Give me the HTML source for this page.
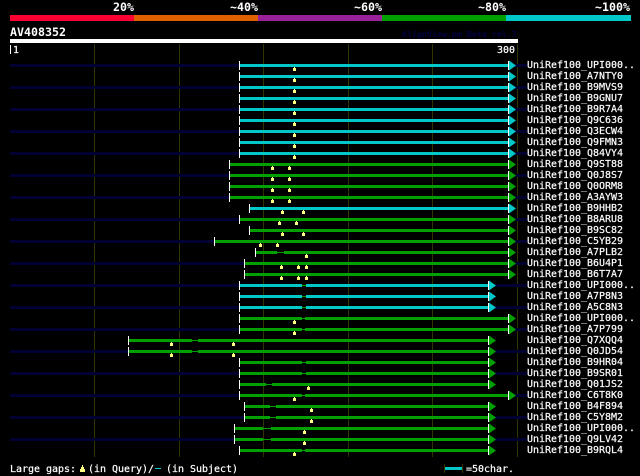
<!DOCTYPE html>
<html><head><meta charset="utf-8"><style>
html,body{margin:0;padding:0;background:#000;width:640px;height:476px;overflow:hidden}
svg{display:block}
text{font-family:"DejaVu Sans Mono","Liberation Mono",monospace;font-size:9.97px;fill:#fff;stroke:#fff;stroke-width:.2px}
.b{font-weight:bold;font-size:11.63px;stroke-width:0}
.d{fill:#000033}.c{fill:#00c8c8}.g{fill:#00a000}
</style></head><body>
<svg width="640" height="476" viewBox="0 0 640 476" xmlns="http://www.w3.org/2000/svg">
<defs>
<g id="s"><rect x="0" y="-3" width="1" height="9" fill="#fff"/></g>
<g id="a"><rect x="0" y="-3" width="1" height="9" fill="#fff"/><polygon points="1,-3.5 8,1.5 1,6.5"/></g>
<g id="t"><rect x="0" y="3" width="1" height="1" fill="#ffff80"/><rect x="-1" y="4" width="3" height="3" fill="#ffff80"/></g>
</defs>
<rect width="640" height="476" fill="#000"/>
<text class="b" x="113" y="11">20%</text><text class="b" x="230" y="11">~40%</text><text class="b" x="354" y="11">~60%</text><text class="b" x="478" y="11">~80%</text><text class="b" x="595" y="11">~100%</text>
<rect x="10" y="15" width="124" height="6" fill="#ff0033"/><rect x="134" y="15" width="124" height="6" fill="#e06000"/><rect x="258" y="15" width="124" height="6" fill="#992299"/><rect x="382" y="15" width="124" height="6" fill="#00a000"/><rect x="506" y="15" width="125" height="6" fill="#00c8c8"/>
<text class="b" x="10" y="36">AV408352</text>
<text x="402" y="37" style="font-size:8.31px;font-weight:bold;fill:#000044;stroke-width:0">AlignView.pm Beta rel.7</text>
<rect x="10" y="39" width="508" height="4" fill="#fff"/>
<rect x="10" y="45" width="1" height="9" fill="#fff"/><text x="13" y="53">1</text><text x="497" y="53">300</text><rect x="517" y="45" width="1" height="9" fill="#fff"/>
<rect x="94" y="44" width="1" height="413" fill="#333300"/><rect x="179" y="44" width="1" height="413" fill="#333300"/><rect x="263" y="44" width="1" height="413" fill="#333300"/><rect x="348" y="44" width="1" height="413" fill="#333300"/><rect x="432" y="44" width="1" height="413" fill="#333300"/><rect x="517" y="44" width="1" height="413" fill="#333300"/>

<g transform="translate(0,64)" class="c"><rect class="d" x="10" y="0" width="229" height="3"/><rect class="d" x="515" y="0" width="12" height="3"/><rect x="240" y="0" width="268" height="3"/><use href="#s" x="239"/><use href="#a" x="508"/><use href="#t" x="294"/><text x="527" y="4">UniRef100_UPI000..</text></g>
<g transform="translate(0,75)" class="c"><rect x="240" y="0" width="268" height="3"/><use href="#s" x="239"/><use href="#a" x="508"/><use href="#t" x="294"/><text x="527" y="4">UniRef100_A7NTY0</text></g>
<g transform="translate(0,86)" class="c"><rect class="d" x="10" y="0" width="229" height="3"/><rect class="d" x="515" y="0" width="12" height="3"/><rect x="240" y="0" width="268" height="3"/><use href="#s" x="239"/><use href="#a" x="508"/><use href="#t" x="294"/><text x="527" y="4">UniRef100_B9MVS9</text></g>
<g transform="translate(0,97)" class="c"><rect x="240" y="0" width="268" height="3"/><use href="#s" x="239"/><use href="#a" x="508"/><use href="#t" x="294"/><text x="527" y="4">UniRef100_B9GNU7</text></g>
<g transform="translate(0,108)" class="c"><rect class="d" x="10" y="0" width="229" height="3"/><rect class="d" x="515" y="0" width="12" height="3"/><rect x="240" y="0" width="268" height="3"/><use href="#s" x="239"/><use href="#a" x="508"/><use href="#t" x="294"/><text x="527" y="4">UniRef100_B9R7A4</text></g>
<g transform="translate(0,119)" class="c"><rect x="240" y="0" width="268" height="3"/><use href="#s" x="239"/><use href="#a" x="508"/><use href="#t" x="294"/><text x="527" y="4">UniRef100_Q9C636</text></g>
<g transform="translate(0,130)" class="c"><rect class="d" x="10" y="0" width="229" height="3"/><rect class="d" x="515" y="0" width="12" height="3"/><rect x="240" y="0" width="268" height="3"/><use href="#s" x="239"/><use href="#a" x="508"/><use href="#t" x="294"/><text x="527" y="4">UniRef100_Q3ECW4</text></g>
<g transform="translate(0,141)" class="c"><rect x="240" y="0" width="268" height="3"/><use href="#s" x="239"/><use href="#a" x="508"/><use href="#t" x="294"/><text x="527" y="4">UniRef100_Q9FMN3</text></g>
<g transform="translate(0,152)" class="c"><rect class="d" x="10" y="0" width="229" height="3"/><rect class="d" x="515" y="0" width="12" height="3"/><rect x="240" y="0" width="268" height="3"/><use href="#s" x="239"/><use href="#a" x="508"/><use href="#t" x="294"/><text x="527" y="4">UniRef100_Q84VY4</text></g>
<g transform="translate(0,163)" class="g"><rect x="230" y="0" width="278" height="3"/><use href="#s" x="229"/><use href="#a" x="508"/><use href="#t" x="272"/><use href="#t" x="289"/><text x="527" y="4">UniRef100_Q9ST88</text></g>
<g transform="translate(0,174)" class="g"><rect class="d" x="10" y="0" width="219" height="3"/><rect class="d" x="515" y="0" width="12" height="3"/><rect x="230" y="0" width="278" height="3"/><use href="#s" x="229"/><use href="#a" x="508"/><use href="#t" x="272"/><use href="#t" x="289"/><text x="527" y="4">UniRef100_Q0J8S7</text></g>
<g transform="translate(0,185)" class="g"><rect x="230" y="0" width="278" height="3"/><use href="#s" x="229"/><use href="#a" x="508"/><use href="#t" x="272"/><use href="#t" x="289"/><text x="527" y="4">UniRef100_Q0ORM8</text></g>
<g transform="translate(0,196)" class="g"><rect class="d" x="10" y="0" width="219" height="3"/><rect class="d" x="515" y="0" width="12" height="3"/><rect x="230" y="0" width="278" height="3"/><use href="#s" x="229"/><use href="#a" x="508"/><use href="#t" x="272"/><use href="#t" x="289"/><text x="527" y="4">UniRef100_A3AYW3</text></g>
<g transform="translate(0,207)" class="c"><rect x="250" y="0" width="258" height="3"/><use href="#s" x="249"/><use href="#a" x="508"/><use href="#t" x="282"/><use href="#t" x="303"/><text x="527" y="4">UniRef100_B9HHB2</text></g>
<g transform="translate(0,218)" class="g"><rect class="d" x="10" y="0" width="229" height="3"/><rect class="d" x="515" y="0" width="12" height="3"/><rect x="240" y="0" width="268" height="3"/><use href="#s" x="239"/><use href="#a" x="508"/><use href="#t" x="279"/><use href="#t" x="296"/><text x="527" y="4">UniRef100_B8ARU8</text></g>
<g transform="translate(0,229)" class="g"><rect x="250" y="0" width="258" height="3"/><use href="#s" x="249"/><use href="#a" x="508"/><use href="#t" x="282"/><use href="#t" x="303"/><text x="527" y="4">UniRef100_B9SC82</text></g>
<g transform="translate(0,240)" class="g"><rect class="d" x="10" y="0" width="204" height="3"/><rect class="d" x="515" y="0" width="12" height="3"/><rect x="215" y="0" width="293" height="3"/><use href="#s" x="214"/><use href="#a" x="508"/><use href="#t" x="260"/><use href="#t" x="277"/><text x="527" y="4">UniRef100_C5YB29</text></g>
<g transform="translate(0,251)" class="g"><rect x="256" y="0" width="21" height="3"/><rect x="277" y="1" width="7" height="1"/><rect x="284" y="0" width="224" height="3"/><use href="#s" x="255"/><use href="#a" x="508"/><use href="#t" x="306"/><text x="527" y="4">UniRef100_A7PLB2</text></g>
<g transform="translate(0,262)" class="g"><rect class="d" x="10" y="0" width="234" height="3"/><rect class="d" x="515" y="0" width="12" height="3"/><rect x="245" y="0" width="263" height="3"/><use href="#s" x="244"/><use href="#a" x="508"/><use href="#t" x="281"/><use href="#t" x="298"/><use href="#t" x="306"/><text x="527" y="4">UniRef100_B6U4P1</text></g>
<g transform="translate(0,273)" class="g"><rect x="245" y="0" width="263" height="3"/><use href="#s" x="244"/><use href="#a" x="508"/><use href="#t" x="281"/><use href="#t" x="298"/><use href="#t" x="306"/><text x="527" y="4">UniRef100_B6T7A7</text></g>
<g transform="translate(0,284)" class="c"><rect class="d" x="10" y="0" width="229" height="3"/><rect class="d" x="495" y="0" width="32" height="3"/><rect x="240" y="0" width="62" height="3"/><rect x="302" y="1" width="4" height="1" class="g"/><rect x="306" y="0" width="182" height="3"/><use href="#s" x="239"/><use href="#a" x="488"/><text x="527" y="4">UniRef100_UPI000..</text></g>
<g transform="translate(0,295)" class="c"><rect x="240" y="0" width="62" height="3"/><rect x="302" y="1" width="4" height="1" class="g"/><rect x="306" y="0" width="182" height="3"/><use href="#s" x="239"/><use href="#a" x="488"/><text x="527" y="4">UniRef100_A7P8N3</text></g>
<g transform="translate(0,306)" class="c"><rect class="d" x="10" y="0" width="229" height="3"/><rect class="d" x="495" y="0" width="32" height="3"/><rect x="240" y="0" width="62" height="3"/><rect x="302" y="1" width="4" height="1" class="g"/><rect x="306" y="0" width="182" height="3"/><use href="#s" x="239"/><use href="#a" x="488"/><text x="527" y="4">UniRef100_A5C8N3</text></g>
<g transform="translate(0,317)" class="g"><rect x="240" y="0" width="62" height="3"/><rect x="302" y="1" width="3" height="1"/><rect x="305" y="0" width="203" height="3"/><use href="#s" x="239"/><use href="#a" x="508"/><use href="#t" x="294"/><text x="527" y="4">UniRef100_UPI000..</text></g>
<g transform="translate(0,328)" class="g"><rect class="d" x="10" y="0" width="229" height="3"/><rect class="d" x="515" y="0" width="12" height="3"/><rect x="240" y="0" width="62" height="3"/><rect x="302" y="1" width="3" height="1"/><rect x="305" y="0" width="203" height="3"/><use href="#s" x="239"/><use href="#a" x="508"/><use href="#t" x="294"/><text x="527" y="4">UniRef100_A7P799</text></g>
<g transform="translate(0,339)" class="g"><rect x="129" y="0" width="63" height="3"/><rect x="192" y="1" width="6" height="1"/><rect x="198" y="0" width="290" height="3"/><use href="#s" x="128"/><use href="#a" x="488"/><use href="#t" x="171"/><use href="#t" x="233"/><text x="527" y="4">UniRef100_Q7XQQ4</text></g>
<g transform="translate(0,350)" class="g"><rect class="d" x="10" y="0" width="118" height="3"/><rect class="d" x="495" y="0" width="32" height="3"/><rect x="129" y="0" width="63" height="3"/><rect x="192" y="1" width="6" height="1"/><rect x="198" y="0" width="290" height="3"/><use href="#s" x="128"/><use href="#a" x="488"/><use href="#t" x="171"/><use href="#t" x="233"/><text x="527" y="4">UniRef100_Q0JD54</text></g>
<g transform="translate(0,361)" class="g"><rect x="240" y="0" width="62" height="3"/><rect x="302" y="1" width="4" height="1"/><rect x="306" y="0" width="182" height="3"/><use href="#s" x="239"/><use href="#a" x="488"/><text x="527" y="4">UniRef100_B9HR04</text></g>
<g transform="translate(0,372)" class="g"><rect class="d" x="10" y="0" width="229" height="3"/><rect class="d" x="495" y="0" width="32" height="3"/><rect x="240" y="0" width="62" height="3"/><rect x="302" y="1" width="4" height="1"/><rect x="306" y="0" width="182" height="3"/><use href="#s" x="239"/><use href="#a" x="488"/><text x="527" y="4">UniRef100_B9SR01</text></g>
<g transform="translate(0,383)" class="g"><rect x="240" y="0" width="26" height="3"/><rect x="266" y="1" width="6" height="1"/><rect x="272" y="0" width="216" height="3"/><use href="#s" x="239"/><use href="#a" x="488"/><use href="#t" x="308"/><text x="527" y="4">UniRef100_Q01JS2</text></g>
<g transform="translate(0,394)" class="g"><rect class="d" x="10" y="0" width="229" height="3"/><rect class="d" x="515" y="0" width="12" height="3"/><rect x="240" y="0" width="62" height="3"/><rect x="302" y="1" width="3" height="1"/><rect x="305" y="0" width="203" height="3"/><use href="#s" x="239"/><use href="#a" x="508"/><use href="#t" x="294"/><text x="527" y="4">UniRef100_C6T8K0</text></g>
<g transform="translate(0,405)" class="g"><rect x="245" y="0" width="25" height="3"/><rect x="270" y="1" width="6" height="1"/><rect x="276" y="0" width="212" height="3"/><use href="#s" x="244"/><use href="#a" x="488"/><use href="#t" x="311"/><text x="527" y="4">UniRef100_B4F894</text></g>
<g transform="translate(0,416)" class="g"><rect class="d" x="10" y="0" width="234" height="3"/><rect class="d" x="495" y="0" width="32" height="3"/><rect x="245" y="0" width="25" height="3"/><rect x="270" y="1" width="6" height="1"/><rect x="276" y="0" width="212" height="3"/><use href="#s" x="244"/><use href="#a" x="488"/><use href="#t" x="311"/><text x="527" y="4">UniRef100_C5Y8M2</text></g>
<g transform="translate(0,427)" class="g"><rect x="235" y="0" width="28" height="3"/><rect x="263" y="1" width="8" height="1"/><rect x="271" y="0" width="217" height="3"/><use href="#s" x="234"/><use href="#a" x="488"/><use href="#t" x="304"/><text x="527" y="4">UniRef100_UPI000..</text></g>
<g transform="translate(0,438)" class="g"><rect class="d" x="10" y="0" width="224" height="3"/><rect class="d" x="495" y="0" width="32" height="3"/><rect x="235" y="0" width="28" height="3"/><rect x="263" y="1" width="8" height="1"/><rect x="271" y="0" width="217" height="3"/><use href="#s" x="234"/><use href="#a" x="488"/><use href="#t" x="304"/><text x="527" y="4">UniRef100_Q9LV42</text></g>
<g transform="translate(0,449)" class="g"><rect x="240" y="0" width="62" height="3"/><rect x="302" y="1" width="3" height="1"/><rect x="305" y="0" width="183" height="3"/><use href="#s" x="239"/><use href="#a" x="488"/><use href="#t" x="294"/><text x="527" y="4">UniRef100_B9RQL4</text></g>

<text x="10" y="472">Large gaps:</text>
<rect x="82" y="465" width="1" height="2" fill="#ffff80"/><rect x="81" y="467" width="3" height="2" fill="#ffff80"/><rect x="80" y="469" width="5" height="3" fill="#ffff80"/>
<text x="88" y="472">(in Query)/</text>
<rect x="155" y="468" width="6" height="1" fill="#00c8c8"/>
<text x="166" y="472">(in Subject)</text>
<rect x="444" y="464" width="1" height="9" fill="#333300"/><rect x="462" y="464" width="1" height="9" fill="#333300"/><rect x="445" y="467" width="17" height="3" fill="#00c8c8"/>
<text x="466" y="472">=50char.</text>
</svg>
</body></html>
